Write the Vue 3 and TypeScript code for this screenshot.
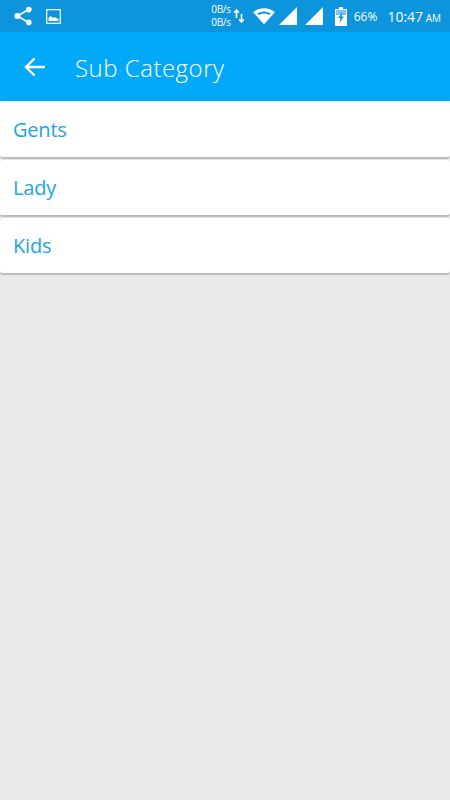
<script setup lang="ts">
const categories = ['Gents', 'Lady', 'Kids']
</script>

<template>
  <div class="screen">
    <div class="status-bar">
      <div class="status-left">
        <svg class="share" width="20" height="20" viewBox="0 0 20 20">
          <path d="M15.5 3.5 4.5 10l11 6.5" fill="none" stroke="#fff" stroke-width="1.8" />
          <circle cx="15.8" cy="3.6" r="2.8" fill="#fff" />
          <circle cx="4.4" cy="10" r="3" fill="#fff" />
          <circle cx="15.8" cy="16.4" r="2.8" fill="#fff" />
        </svg>
        <svg width="15" height="15" viewBox="0 0 15 15">
          <rect x="0.7" y="0.7" width="13.6" height="13.6" fill="none" stroke="#fff" stroke-width="1.2" />
          <path d="M2.5 12V9l2-2 2.5 2 1.5-1 4 2v2z" fill="#fff" />
        </svg>
      </div>
      <div class="status-right">
        <div class="speeds">
          <span>0B/s</span>
          <span>0B/s</span>
        </div>
        <svg class="arrows" width="12" height="14" viewBox="0 0 12 14">
          <path d="M3.5 1v8M1.2 3.6 3.5 1l2.3 2.6M8.5 13V5M6.2 10.4 8.5 13l2.3-2.6" fill="none" stroke="#fff" stroke-width="1.6" />
        </svg>
        <svg class="wifi" width="22" height="18" viewBox="0 0 23 17">
          <path d="M0 4.5C6.5-1 16.5-1 23 4.500L11.500 17z" fill="#fff" />
          <path d="M4.500 5.800C8.500 3 14.500 3 18.500 5.800L17 7.500C13.500 5.500 9.500 5.500 6 7.500z" fill="#0c94dc" />
        </svg>
        <svg class="signal" width="18" height="18" viewBox="0 0 18 18"><path d="M0 18 18 0v18z" fill="#fff" /></svg>
        <svg class="signal second" width="18" height="18" viewBox="0 0 18 18"><path d="M0 18 18 0v18z" fill="#fff" /></svg>
        <svg class="battery" width="12" height="19" viewBox="0 0 12 19">
          <path d="M4 0h4v2h4v17H0V2h4z" fill="#fff" />
          <path d="M1 3h10v5H1z" fill="#7cc4ec" />
          <path d="M7.500 5 3 11h2.500L4.500 16 9 9.500H6.500z" fill="#0c94dc" />
        </svg>
        <span class="percent">66%</span>
        <span class="clock">10:47<small> AM</small></span>
      </div>
    </div>

    <header class="app-bar">
      <svg width="24" height="24" viewBox="0 0 24 24">
        <path d="M22 12H3M11.500 3.500 3 12l8.500 8.500" fill="none" stroke="#fff" stroke-width="2.400" />
      </svg>
      <span class="title">Sub Category</span>
    </header>

    <main class="list">
      <div v-for="category in categories" :key="category" class="card">{{ category }}</div>
    </main>
  </div>
</template>

<style>
html,
body {
  margin: 0;
  background: #e9e9e9;
}
</style>

<style scoped>
.screen {
  width: 450px;
  height: 800px;
  display: flex;
  flex-direction: column;
  overflow: hidden;
  background: #e9e9e9;
  font-family: "Open Sans", "Noto Sans", sans-serif;
}

.status-bar {
  height: 32px;
  flex-shrink: 0;
  display: flex;
  align-items: center;
  justify-content: space-between;
  padding: 0 9px 0 13px;
  background: #0c94dc;
  color: #fff;
}

.status-left {
  display: flex;
  align-items: center;
  gap: 13px;
}

.status-right {
  display: flex;
  align-items: center;
}

.speeds {
  display: flex;
  flex-direction: column;
  font-size: 10px;
  line-height: 13px;
  letter-spacing: -0.3px;
}

.arrows {
  margin-left: 2px;
}

.wifi {
  margin-left: 8px;
}

.signal {
  margin-left: 4px;
}

.signal.second {
  margin-left: 8px;
}

.battery {
  margin-left: 12px;
}

.percent {
  margin-left: 7px;
  font-size: 12px;
}

.clock {
  margin-left: 10px;
  font-size: 14px;
}

.clock small {
  font-size: 10px;
}

.app-bar {
  height: 69px;
  flex-shrink: 0;
  display: flex;
  align-items: center;
  gap: 28px;
  padding-left: 23px;
  background: #03a9f9;
  color: #fff;
}

.title {
  padding-top: 1px;
  font-size: 24px;
  font-weight: 300;
  letter-spacing: 0.5px;
}

.list {
  display: flex;
  flex-direction: column;
  gap: 2px;
  padding-top: 1px;
}

.card {
  height: 56px;
  box-sizing: border-box;
  display: flex;
  align-items: center;
  padding: 0 0 1px 13px;
  border-radius: 3px;
  background: #fff;
  border-bottom: 1px solid #b9b9b9;
  box-shadow: 0 1px 1px rgba(0, 0, 0, 0.2);
  color: #1ba5e2;
  font-size: 20px;
  letter-spacing: -0.2px;
}
</style>
